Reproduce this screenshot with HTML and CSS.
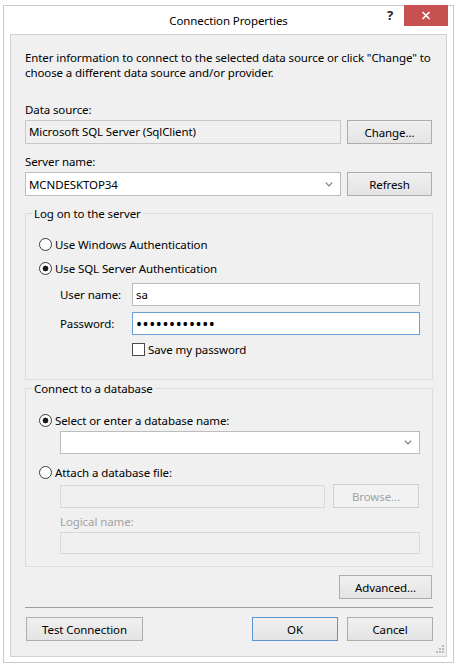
FILE: index.html
```html
<!DOCTYPE html>
<html lang="en">
<head>
  <meta charset="UTF-8">
  <title>Connection Properties</title>
  <link rel="stylesheet" href="styles.css">
</head>
<body>
  <div class="window">
    <!-- Title bar -->
    <div class="titlebar">
      <span class="title">Connection Properties</span>
      <div class="caption-buttons">
        <span class="help">?</span>
        <span class="close">
          <svg width="10" height="9" viewBox="0 0 10 9">
            <path d="M1.5 1 L8.5 8 M8.5 1 L1.5 8" stroke="#fff" stroke-width="1.6"/>
          </svg>
        </span>
      </div>
    </div>

    <div class="client">
      <p class="intro">Enter information to connect to the selected data source or click "Change" to<br>choose a different data source and/or provider.</p>

      <!-- Data source -->
      <div class="field-label first">Data source:</div>
      <div class="row">
        <div class="readonly">Microsoft SQL Server (SqlClient)</div>
        <button class="btn">Change...</button>
      </div>

      <!-- Server name -->
      <div class="field-label">Server name:</div>
      <div class="row">
        <div class="combo">
          <input type="text" value="MCNDESKTOP34">
          <svg class="chevron" width="8" height="5" viewBox="0 0 8 5">
            <path d="M0.8 0.6 L4 3.8 L7.2 0.6" fill="none" stroke="#7a7a7a" stroke-width="1.2"/>
          </svg>
        </div>
        <button class="btn">Refresh</button>
      </div>

      <!-- Log on -->
      <fieldset class="group logon">
        <legend>Log on to the server</legend>
        <label class="option"><input type="radio" name="auth"> Use Windows Authentication</label>
        <label class="option second"><input type="radio" name="auth" checked> Use SQL Server Authentication</label>
        <div class="cred-row user">
          <label>User name:</label>
          <input type="text" class="text" value="sa">
        </div>
        <div class="cred-row pass">
          <label>Password:</label>
          <input type="password" class="text focused" value="sqlserver2k8">
        </div>
        <label class="check"><input type="checkbox"> Save my password</label>
      </fieldset>

      <!-- Database -->
      <fieldset class="group database">
        <legend>Connect to a database</legend>
        <label class="option"><input type="radio" name="db" checked> Select or enter a database name:</label>
        <div class="combo db-combo">
          <input type="text" value="">
          <svg class="chevron" width="8" height="5" viewBox="0 0 8 5">
            <path d="M0.8 0.6 L4 3.8 L7.2 0.6" fill="none" stroke="#7a7a7a" stroke-width="1.2"/>
          </svg>
        </div>
        <label class="option attach"><input type="radio" name="db"> Attach a database file:</label>
        <div class="file-row">
          <input type="text" class="text" disabled>
          <button class="btn" disabled>Browse...</button>
        </div>
        <div class="disabled-label">Logical name:</div>
        <input type="text" class="text logical" disabled>
      </fieldset>

      <div class="advanced-row">
        <button class="btn advanced">Advanced...</button>
      </div>

      <hr class="separator">

      <div class="footer">
        <button class="btn test">Test Connection</button>
        <span class="spacer"></span>
        <button class="btn default">OK</button>
        <button class="btn">Cancel</button>
      </div>

      <svg class="grip" width="8" height="8" viewBox="0 0 8 8">
        <rect x="6" y="0" width="2" height="2" fill="#bcbcbc"/>
        <rect x="3" y="3" width="2" height="2" fill="#bcbcbc"/>
        <rect x="6" y="3" width="2" height="2" fill="#bcbcbc"/>
        <rect x="0" y="6" width="2" height="2" fill="#bcbcbc"/>
        <rect x="3" y="6" width="2" height="2" fill="#bcbcbc"/>
        <rect x="6" y="6" width="2" height="2" fill="#bcbcbc"/>
      </svg>
    </div>
  </div>
</body>
</html>
```

FILE: styles.css
```css
* {
  box-sizing: border-box;
}
body {
  margin: 0;
  background-color: #ffffff;
  font-family: "Noto Sans", "Open Sans", sans-serif;
  font-size: 11.5px;
  letter-spacing: -0.1px;
  line-height: 15px;
  color: #000000;
}
input, button {
  font-family: inherit;
  font-size: inherit;
  letter-spacing: inherit;
  color: #000000;
  margin: 0;
}

/* window frame */
.window {
  width: 451px;
  margin: 5px 0 0 3px;
  background-color: #ffffff;
  border: 1px solid #cacaca;
  padding-bottom: 5px;
}
.titlebar {
  position: relative;
  height: 28px;
  display: flex;
  align-items: center;
  justify-content: center;
}
.caption-buttons {
  position: absolute;
  top: -1px;
  right: 5px;
  display: flex;
  align-items: flex-start;
}
.help {
  width: 24px;
  height: 21px;
  margin-right: 2px;
  text-align: center;
  font-weight: bold;
  font-size: 13px;
  line-height: 20px;
  color: #222222;
}
.close {
  width: 44px;
  height: 21px;
  background-color: #c75050;
  display: flex;
  align-items: center;
  justify-content: center;
}

/* dialog body */
.client {
  position: relative;
  margin: 0 6px;
  background-color: #f0f0f0;
  border: 1px solid #d2d2d2;
  padding: 15px 14px 15px 14px;
}
.intro {
  margin: 0;
  white-space: nowrap;
}
.field-label {
  margin-top: 10px;
}
.field-label.first {
  margin-top: 22px;
}
.row {
  display: flex;
  gap: 6px;
  height: 24px;
  margin-top: 3px;
}
.readonly {
  flex: 1;
  border: 1px solid #c8c8c8;
  background-color: #f0f0f0;
  padding: 0 3px;
  line-height: 22px;
}
.combo {
  flex: 1;
  display: flex;
  align-items: center;
  background-color: #ffffff;
  border: 1px solid #bcbcbc;
}
.combo input {
  flex: 1;
  min-width: 0;
  height: 100%;
  border: none;
  outline: none;
  padding: 0 3px;
  background: transparent;
}
.chevron {
  margin-right: 7px;
}

/* buttons */
.btn {
  width: 85px;
  height: 24px;
  padding: 0;
  border: 1px solid #adadad;
  background: linear-gradient(#f0f0f0, #e4e4e4);
  text-align: center;
}
.btn:disabled {
  color: #a3a3a3;
  border-color: #d0d0d0;
  background: #f2f2f2;
}
.btn.default {
  border-color: #5b95cf;
}

/* group boxes */
.group {
  margin: 10px -1px 0 0;
  border: 1px solid #dcdcdc;
  padding: 16px 12px 22px 13px;
  min-width: 0;
}
.group legend {
  padding: 0 2px;
  margin-left: -7px;
  line-height: 15px;
}
.group.database {
  margin-top: 1px;
  padding: 17px 12px 12px 13px;
}
.option {
  display: flex;
  align-items: center;
  gap: 3px;
  height: 15px;
}
.option.second {
  margin-top: 9px;
}
.option.attach {
  margin-top: 11px;
}
.option input {
  -webkit-appearance: none;
  appearance: none;
  width: 13px;
  height: 13px;
  border: 1px solid #3c3c3c;
  border-radius: 50%;
  background: #ffffff;
  margin: 0;
}
.option input:checked {
  background: radial-gradient(circle, #1a1a1a 0 2.6px, #ffffff 3.2px);
}
.cred-row {
  display: flex;
  align-items: center;
  margin-left: 21px;
}
.cred-row.user {
  margin-top: 7px;
}
.cred-row.pass {
  margin-top: 6px;
}
.cred-row label {
  width: 72px;
}
.text {
  flex: 1;
  height: 23px;
  border: 1px solid #bcbcbc;
  background-color: #ffffff;
  padding: 0 3px;
  outline: none;
}
.text.focused {
  border-color: #6a9fd4;
  font-size: 16px;
  letter-spacing: 0.6px;
}
.text:disabled {
  background-color: #f0f0f0;
  border-color: #d9d9d9;
}
.check {
  display: flex;
  align-items: center;
  gap: 3px;
  height: 15px;
  margin: 7px 0 0 93px;
}
.check input {
  -webkit-appearance: none;
  appearance: none;
  width: 13px;
  height: 13px;
  border: 1px solid #4a4a4a;
  background: #ffffff;
  margin: 0;
}
.db-combo {
  height: 23px;
  margin: 3px 0 0 21px;
}
.file-row {
  display: flex;
  align-items: center;
  gap: 8px;
  height: 24px;
  margin: 4px 1px 0 21px;
}
.file-row .btn {
  width: 86px;
}
.disabled-label {
  color: #a3a3a3;
  margin: 6px 0 0 21px;
}
.text.logical {
  display: block;
  width: calc(100% - 21px);
  height: 22px;
  margin: 3px 0 0 21px;
}

/* bottom buttons */
.advanced-row {
  display: flex;
  justify-content: flex-end;
  margin-top: 8px;
}
.btn.advanced {
  width: 93px;
}
.separator {
  margin: 8px -1px 0 0;
  border: none;
  border-top: 1px solid #a0a0a0;
}
.footer {
  display: flex;
  gap: 9px;
  margin: 9px -1px 0 0;
}
.footer .btn {
  width: 86px;
}
.footer .btn.test {
  width: 117px;
  margin-left: 1px;
}
.spacer {
  flex: 1;
}
.grip {
  position: absolute;
  right: 2px;
  bottom: 3px;
}
```
